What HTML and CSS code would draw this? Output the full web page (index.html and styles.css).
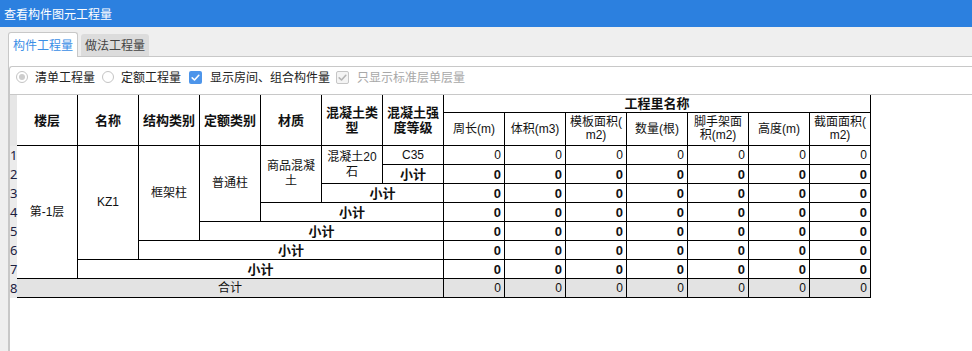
FILE: index.html
```html
<!DOCTYPE html>
<html lang="zh-CN">
<head>
<meta charset="utf-8">
<title>查看构件图元工程量</title>
<link rel="stylesheet" href="styles.css">
</head>
<body>
<div class="titlebar">查看构件图元工程量</div>
<div class="tabs">
  <div class="tab active">构件工程量</div>
  <div class="tab">做法工程量</div>
</div>
<div class="panel">
  <div class="groupbox">
    <div class="options">
      <div class="opt"><span class="radio checked"></span><span>清单工程量</span></div>
      <div class="opt"><span class="radio"></span><span>定额工程量</span></div>
      <div class="opt chk-opt"><span class="check on"><svg viewBox="0 0 13 13" width="13" height="13"><path d="M3.2 6.8 L5.5 9 L9.8 4.3" fill="none" stroke="#fff" stroke-width="1.6" stroke-linecap="round" stroke-linejoin="round"/></svg></span><span>显示房间、组合构件量</span></div>
      <div class="opt disabled"><span class="check off"><svg viewBox="0 0 13 13" width="13" height="13"><path d="M3.2 6.8 L5.5 9 L9.8 4.3" fill="none" stroke="#b4b4b4" stroke-width="1.6" stroke-linecap="round" stroke-linejoin="round"/></svg></span><span>只显示标准层单层量</span></div>
    </div>
    <div class="grid">
      <table class="qty">
        <colgroup>
          <col class="c-rn">
          <col class="c"><col class="c"><col class="c"><col class="c"><col class="c"><col class="c"><col class="c">
          <col class="c"><col class="c"><col class="c"><col class="c"><col class="c"><col class="c"><col class="c">
        </colgroup>
        <thead>
          <tr class="h1">
            <th class="rn" rowspan="2"></th>
            <th rowspan="2">楼层</th>
            <th rowspan="2">名称</th>
            <th rowspan="2">结构类别</th>
            <th rowspan="2">定额类别</th>
            <th rowspan="2">材质</th>
            <th rowspan="2">混凝土类型</th>
            <th rowspan="2">混凝土强度等级</th>
            <th colspan="7">工程里名称</th>
          </tr>
          <tr class="h2 sub">
            <th>周长(m)</th>
            <th>体积(m3)</th>
            <th>模板面积(<br>m2)</th>
            <th>数量(根)</th>
            <th>脚手架面积(m2)</th>
            <th>高度(m)</th>
            <th>截面面积(<br>m2)</th>
          </tr>
        </thead>
        <tbody>
          <tr>
            <td class="rn">1</td>
            <td rowspan="7">第-1层</td>
            <td rowspan="6">KZ1</td>
            <td rowspan="5">框架柱</td>
            <td rowspan="4">普通柱</td>
            <td rowspan="3">商品混凝土</td>
            <td rowspan="2">混凝土20石</td>
            <td>C35</td>
            <td class="num">0</td><td class="num">0</td><td class="num">0</td><td class="num">0</td><td class="num">0</td><td class="num">0</td><td class="num">0</td>
          </tr>
          <tr class="sum">
            <td class="rn">2</td>
            <td>小计</td>
            <td class="num">0</td><td class="num">0</td><td class="num">0</td><td class="num">0</td><td class="num">0</td><td class="num">0</td><td class="num">0</td>
          </tr>
          <tr class="sum">
            <td class="rn">3</td>
            <td colspan="2">小计</td>
            <td class="num">0</td><td class="num">0</td><td class="num">0</td><td class="num">0</td><td class="num">0</td><td class="num">0</td><td class="num">0</td>
          </tr>
          <tr class="sum">
            <td class="rn">4</td>
            <td colspan="3">小计</td>
            <td class="num">0</td><td class="num">0</td><td class="num">0</td><td class="num">0</td><td class="num">0</td><td class="num">0</td><td class="num">0</td>
          </tr>
          <tr class="sum">
            <td class="rn">5</td>
            <td colspan="4">小计</td>
            <td class="num">0</td><td class="num">0</td><td class="num">0</td><td class="num">0</td><td class="num">0</td><td class="num">0</td><td class="num">0</td>
          </tr>
          <tr class="sum">
            <td class="rn">6</td>
            <td colspan="5">小计</td>
            <td class="num">0</td><td class="num">0</td><td class="num">0</td><td class="num">0</td><td class="num">0</td><td class="num">0</td><td class="num">0</td>
          </tr>
          <tr class="sum">
            <td class="rn">7</td>
            <td colspan="6">小计</td>
            <td class="num">0</td><td class="num">0</td><td class="num">0</td><td class="num">0</td><td class="num">0</td><td class="num">0</td><td class="num">0</td>
          </tr>
          <tr class="total">
            <td class="rn">8</td>
            <td colspan="7">合计</td>
            <td class="num">0</td><td class="num">0</td><td class="num">0</td><td class="num">0</td><td class="num">0</td><td class="num">0</td><td class="num">0</td>
          </tr>
        </tbody>
      </table>
    </div>
  </div>
</div>
</body>
</html>
```

FILE: styles.css
```css
* {
  box-sizing: border-box;
}

html,
body {
  margin: 0;
  padding: 0;
}

body {
  width: 972px;
  height: 351px;
  overflow: hidden;
  background: #efefef;
  font-family: "Noto Sans CJK SC", "Liberation Sans", sans-serif;
  font-size: 12px;
  color: #222;
}

.titlebar {
  height: 27px;
  line-height: 27px;
  padding-left: 4px;
  background: #2c80df;
  color: #fff;
  font-size: 12px;
}

.tabs {
  display: flex;
  align-items: flex-end;
  height: 29px;
  padding-left: 8px;
}

.tab {
  height: 22px;
  line-height: 22px;
  padding: 0 4px;
  margin-left: 3px;
  background: #dcdcdc;
  border-radius: 3px 3px 0 0;
  color: #444;
}

.tab.active {
  position: relative;
  z-index: 1;
  height: 25px;
  line-height: 23px;
  margin-left: 0;
  margin-bottom: -1px;
  background: #fff;
  border: 1px solid #c8c8c8;
  border-bottom: none;
  color: #3a8ee6;
}

.panel {
  margin-left: 8px;
  height: 295px;
  padding-top: 9px;
  background: #fff;
  border-top: 1px solid #c8c8c8;
  border-left: 1px solid #c8c8c8;
}

.groupbox {
  height: 100%;
  border-top: 1px solid #c8c8c8;
  border-left: 1px solid #c8c8c8;
  border-top-left-radius: 3px;
}

.options {
  display: flex;
  align-items: center;
  height: 27px;
  padding: 0 0 7px 6px;
}

.opt {
  display: flex;
  align-items: center;
  gap: 7px;
  margin-right: 7px;
  line-height: 20px;
}

.opt.chk-opt {
  gap: 8px;
  margin-left: 1px;
  margin-right: 6px;
}

.opt.disabled {
  gap: 8px;
  color: #a8a8a8;
}

.radio {
  display: flex;
  align-items: center;
  justify-content: center;
  width: 12px;
  height: 12px;
  border: 1px solid #c4c4c4;
  border-radius: 50%;
  background: #fff;
}

.radio.checked::after {
  content: "";
  width: 6px;
  height: 6px;
  border-radius: 50%;
  background: #cdcdcd;
}

.check {
  display: block;
  width: 13px;
  height: 13px;
  border-radius: 2px;
}

.check svg {
  display: block;
}

.check.on {
  background: #4d95ea;
}

.check.off {
  background: #f4f4f4;
  border: 1px solid #c6c6c6;
}

.check.off svg {
  margin: -1px;
}

.grid {
  border-top: 1px solid #c8c8c8;
}

.qty {
  border-collapse: separate;
  border-spacing: 0;
  table-layout: fixed;
  width: 861px;
  font-family: "Liberation Sans", "Noto Sans CJK SC", sans-serif;
  color: #111;
}

.c-rn {
  width: 7px;
}

.c {
  width: 61px;
}

.qty th,
.qty td {
  padding: 0 2px;
  border-right: 1px solid #000;
  border-bottom: 1px solid #000;
  text-align: center;
  vertical-align: middle;
  overflow: hidden;
  line-height: 15px;
}

.qty th {
  font-size: 13px;
  font-weight: bold;
}

.qty .sub th {
  font-size: 12px;
  font-weight: normal;
  line-height: 13px;
}

.h1 {
  height: 18px;
}

.h2 {
  height: 33px;
}

.qty tbody tr {
  height: 19px;
}

.qty td {
  font-size: 12px;
}

.qty .rn {
  padding: 0;
  border: none;
  background: #ebebeb;
  text-align: left;
  font-family: "Noto Sans", "Liberation Sans", sans-serif;
  font-size: 13px;
  color: #1c2040;
  overflow: visible;
}

.qty th.rn {
  background: #e6e6e6;
}

.qty .num {
  text-align: right;
  padding-right: 3px;
}

.sum td {
  font-weight: bold;
  font-size: 13px;
}

.sum td.rn {
  font-weight: normal;
}

.total td {
  background: #e3e3e3;
}

.total td.rn {
  background: #ebebeb;
}
```
